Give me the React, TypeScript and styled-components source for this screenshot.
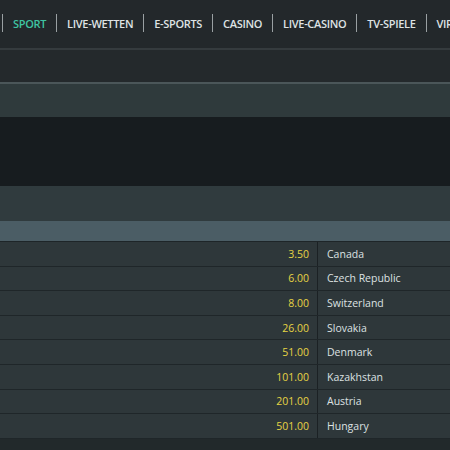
import React from "react";
import styled, { createGlobalStyle } from "styled-components";

const Global = createGlobalStyle`
  html, body { margin: 0; padding: 0; background: #22292b; }
  body { font-family: "Open Sans", "Liberation Sans", sans-serif; }
  * { box-sizing: border-box; }
`;

const Page = styled.div`
  width: 450px;
  height: 450px;
  overflow: hidden;
  display: flex;
  flex-direction: column;
  background: #22292b;
`;

const Nav = styled.nav`
  height: 50px;
  flex: none;
  display: flex;
  align-items: center;
  background: #23282b;
  padding-left: 2px;
  padding-bottom: 2px;
  white-space: nowrap;
  border-bottom: 2px solid #353b3e;
`;

const NavItem = styled.a<{ $active?: boolean }>`
  flex: none;
  display: flex;
  align-items: center;
  height: 18px;
  padding: 0 10px;
  border-left: 1px solid #9aa0a3;
  font-size: 11px;
  font-weight: 600;
  letter-spacing: -0.32px;
  color: ${(p) => (p.$active ? "#3fc4a2" : "#dfe3e4")};
`;

const Band = styled.div<{ $h: number; $bg: string; $top?: string }>`
  flex: none;
  height: ${(p) => p.$h}px;
  background: ${(p) => p.$bg};
  border-top: ${(p) => (p.$top ? `2px solid ${p.$top}` : "none")};
`;

const Table = styled.div`
  flex: none;
  display: flex;
  flex-direction: column;
  border-top: 1px solid #1e2528;
`;

const Row = styled.div`
  height: 24.6px;
  flex: none;
  display: grid;
  grid-template-columns: 317px 1px 1fr;
  align-items: center;
  background: #2e373a;
  border-bottom: 1px solid #1f2629;
  font-size: 10.5px;
`;

const Odd = styled.span`
  text-align: right;
  padding-right: 8px;
  color: #e6d444;
`;

const Divider = styled.span`
  height: 100%;
  background: #1b2124;
`;

const Team = styled.span`
  padding-left: 9px;
  color: #dde1e2;
`;

const navItems = ["SPORT", "LIVE-WETTEN", "E-SPORTS", "CASINO", "LIVE-CASINO", "TV-SPIELE", "VIRTUELL"];

const rows: [string, string][] = [
  ["3.50", "Canada"],
  ["6.00", "Czech Republic"],
  ["8.00", "Switzerland"],
  ["26.00", "Slovakia"],
  ["51.00", "Denmark"],
  ["101.00", "Kazakhstan"],
  ["201.00", "Austria"],
  ["501.00", "Hungary"],
];

export default function App() {
  return (
    <Page>
      <Global />
      <Nav>
        {navItems.map((n, i) => (
          <NavItem key={n} $active={i === 0}>
            {n}
          </NavItem>
        ))}
      </Nav>
      <Band $h={32} $bg="#24292c" />
      <Band $h={35} $bg="#2f3a3c" $top="#4b5659" />
      <Band $h={69} $bg="#171c1f" />
      <Band $h={35} $bg="#303b3e" />
      <Band $h={20} $bg="#4b5d65" />
      <Table>
        {rows.map(([o, t]) => (
          <Row key={t}>
            <Odd>{o}</Odd>
            <Divider />
            <Team>{t}</Team>
          </Row>
        ))}
      </Table>
    </Page>
  );
}
